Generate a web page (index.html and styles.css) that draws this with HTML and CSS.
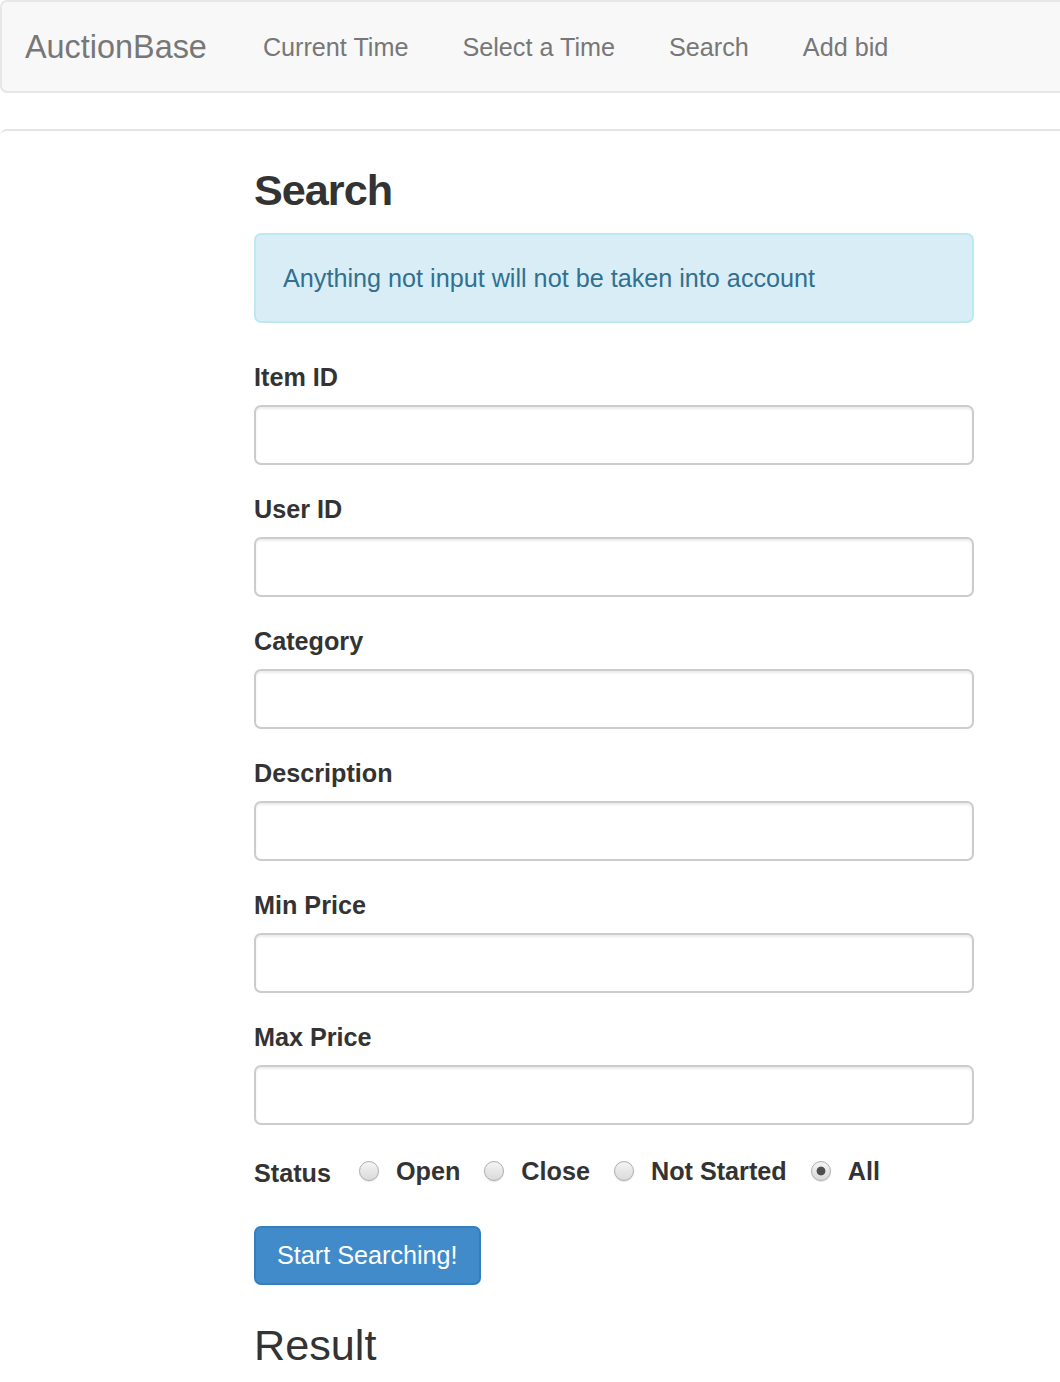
FILE: index.html
```html
<!DOCTYPE html>
<html lang="en">
<head>
<meta charset="utf-8">
<title>AuctionBase - Search</title>
<link rel="stylesheet" href="styles.css">
</head>
<body>
<nav class="navbar">
  <a class="brand" href="#">AuctionBase</a>
  <ul class="nav">
    <li><a href="#">Current Time</a></li>
    <li><a href="#">Select a Time</a></li>
    <li><a href="#">Search</a></li>
    <li><a href="#">Add bid</a></li>
  </ul>
</nav>
<div class="page">
  <main class="content">
    <h3 class="heading title">Search</h3>
    <div class="alert">Anything not input will not be taken into account</div>
    <form class="form">
      <div class="form-group">
        <label class="label" for="itemID">Item ID</label>
        <input class="input" type="text" id="itemID">
      </div>
      <div class="form-group">
        <label class="label" for="userID">User ID</label>
        <input class="input" type="text" id="userID">
      </div>
      <div class="form-group">
        <label class="label" for="category">Category</label>
        <input class="input" type="text" id="category">
      </div>
      <div class="form-group">
        <label class="label" for="description">Description</label>
        <input class="input" type="text" id="description">
      </div>
      <div class="form-group">
        <label class="label" for="minPrice">Min Price</label>
        <input class="input" type="text" id="minPrice">
      </div>
      <div class="form-group">
        <label class="label" for="maxPrice">Max Price</label>
        <input class="input" type="text" id="maxPrice">
      </div>
      <div class="status-row">
        <span class="status-label">Status</span>
        <label class="radio-inline"><input class="radio" type="radio" name="status" value="open"><span>Open</span></label>
        <label class="radio-inline"><input class="radio" type="radio" name="status" value="close"><span>Close</span></label>
        <label class="radio-inline"><input class="radio" type="radio" name="status" value="notStarted"><span>Not Started</span></label>
        <label class="radio-inline"><input class="radio" type="radio" name="status" value="all" checked><span>All</span></label>
      </div>
      <button class="btn" type="button">Start Searching!</button>
    </form>
    <h3 class="heading result">Result</h3>
  </main>
</div>
</body>
</html>
```

FILE: styles.css
```css
* { box-sizing: border-box; }

html, body {
  margin: 0;
  padding: 0;
  background: #fff;
}

body {
  font-family: "Liberation Sans", Arial, Helvetica, sans-serif;
  font-size: 25.2px;
  line-height: 36px;
  color: #333;
}

.navbar {
  display: flex;
  align-items: center;
  height: 93px;
  background: #f8f8f8;
  border: 2px solid #e7e7e7;
  border-right: none;
  border-radius: 7px 0 0 7px;
  margin-bottom: 36px;
}

.brand {
  padding: 0 29px 0 23px;
  font-size: 32.4px;
  color: #777;
  text-decoration: none;
  line-height: 36px;
}

.nav {
  display: flex;
  list-style: none;
  margin: 0;
  padding: 0;
}

.nav a {
  display: block;
  padding: 0 27px;
  color: #777;
  text-decoration: none;
  font-size: 25.2px;
}

.page {
  border-top: 2px solid #e4e4e4;
  border-top-left-radius: 7px;
}

.content {
  width: 720px;
  margin-left: 254px;
}

.heading {
  font-size: 43.2px;
  font-weight: normal;
  line-height: 1.1;
  margin: 36px 0 18px;
  color: #333;
}

.title {
  font-weight: bold;
  letter-spacing: -1px;
}

.result {
  margin-top: 37px;
}

.alert {
  background: #d9edf7;
  border: 2px solid #bce8f1;
  color: #31708f;
  border-radius: 7px;
  padding: 25px 27px;
  margin-bottom: 36px;
}

.form { margin: 0; }

.form-group {
  margin-bottom: 26px;
}

.label {
  display: block;
  font-weight: bold;
  margin-bottom: 10px;
}

.input {
  display: block;
  width: 100%;
  height: 60px;
  border: 2px solid #ccc;
  border-radius: 7px;
  background: #fff;
  box-shadow: inset 0 2px 2px rgba(0, 0, 0, 0.075);
  font: inherit;
  padding: 0 21px;
  margin: 0;
}

.status-row {
  display: flex;
  align-items: center;
  height: 38px;
  padding-top: 2px;
  margin-bottom: 37px;
  font-weight: bold;
}

.status-label {
  margin-right: 28px;
  position: relative;
  top: 2px;
}

.radio-inline {
  display: flex;
  align-items: center;
  gap: 17px;
  margin-right: 24px;
}

.radio {
  -webkit-appearance: none;
  appearance: none;
  width: 20px;
  height: 20px;
  margin: 0;
  border-radius: 50%;
  border: 1px solid #aeaeae;
  background: linear-gradient(#f4f4f4, #dadada);
  box-shadow: 0 1px 1px rgba(0, 0, 0, 0.12);
  flex: none;
}

.radio:checked {
  background: radial-gradient(circle, #4e4e4e 0, #4e4e4e 4px, transparent 4.8px), linear-gradient(#f4f4f4, #dadada);
}

.btn {
  display: inline-block;
  background: #428bca;
  border: 2px solid #357ebd;
  border-radius: 7px;
  color: #fff;
  font: inherit;
  font-size: 25.2px;
  line-height: 35px;
  padding: 10px 21px;
  margin: 0;
  cursor: pointer;
}
```
